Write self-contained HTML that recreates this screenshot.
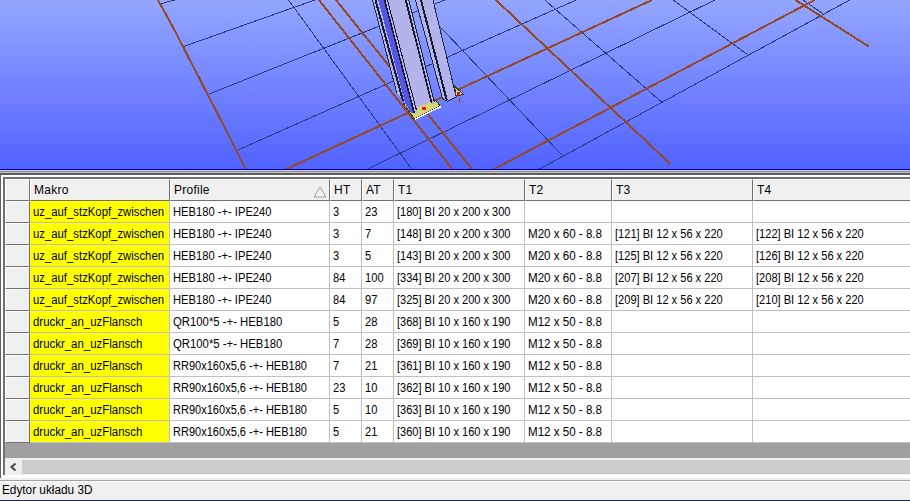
<!DOCTYPE html><html><head><meta charset="utf-8"><title>Edytor układu 3D</title><style>html,body{margin:0;padding:0;}
body{width:910px;height:501px;overflow:hidden;position:relative;background:#f0f0f0;font-family:"Liberation Sans",sans-serif;font-size:12px;color:#000;}
#scene{position:absolute;left:0;top:0;width:910px;height:170px;overflow:hidden;background:linear-gradient(#94a6ff 0px,#5163ff 169px);}
#scene svg{position:absolute;left:0;top:0;display:block;}
.ln{position:absolute;left:0;width:910px;}
#frame{position:absolute;left:0;top:173px;width:915px;height:305px;background:#fff;border-left:1px solid #606060;border-top:2px solid #606060;box-sizing:border-box;}
#inner{position:absolute;left:2px;top:2px;width:915px;height:298px;background:#a0a0a0;border-left:2px solid #707070;border-top:2px solid #707070;box-sizing:border-box;}
#grid{position:absolute;left:0;top:0;width:910px;height:264px;background:#a0a0a0;}
.hrow{position:absolute;left:0;top:0;height:22px;width:910px;}
.hc{position:absolute;top:0;height:22px;box-sizing:border-box;background:#f0f0f0;border-right:1px solid #707070;border-bottom:1px solid #707070;border-left:1px solid #fff;border-top:1px solid #fff;}
.hc span{position:absolute;left:3px;top:3px;white-space:nowrap;letter-spacing:0.25px;}
.tri{position:absolute;right:2px;top:6px;}
.row{position:absolute;left:0;height:22px;width:910px;}
.rh{position:absolute;top:0;height:22px;box-sizing:border-box;background:#f0f0f0;border-right:1px solid #707070;border-bottom:1px solid #707070;border-left:1px solid #fff;border-top:1px solid #fff;}
.c{position:absolute;top:0;height:22px;box-sizing:border-box;background:#fff;border-right:1px solid #c0c0c0;border-bottom:1px solid #c0c0c0;}
.c.y{background:#ffff00;}
.c span{position:absolute;left:3px;top:4px;white-space:nowrap;display:inline-block;transform-origin:0 50%;}
#hscroll{position:absolute;left:0;top:279px;width:910px;height:17px;background:#f0f0f0;}
#hscroll .arrow{position:absolute;left:4px;top:3px;}
#hscroll .thumb{position:absolute;left:17px;top:2px;width:900px;height:14px;background:#cdcdcd;}
#status{position:absolute;left:0;top:480px;width:910px;height:20px;background:#f0f0f0;border-top:1px solid #a0a0a0;box-sizing:border-box;}
#status i{position:absolute;left:0;top:0;width:910px;height:1px;background:#fff;}
#status span{position:absolute;left:2px;top:2px;white-space:nowrap;display:inline-block;transform-origin:0 50%;}
#bot{position:absolute;left:0;top:500px;width:910px;height:1px;background:#1c2a48;}
</style></head><body>
<div id="scene"><svg width="910" height="170" viewBox="0 0 910 170" shape-rendering="crispEdges">
<g stroke="#2a3a7a" stroke-width="1" fill="none">
<line x1="159.2" y1="4.2" x2="175" y2="0"/>
<line x1="183.7" y1="46.5" x2="314.8" y2="0"/>
<line x1="208.2" y1="94.4" x2="444.7" y2="0"/>
<line x1="238.4" y1="149.8" x2="576.2" y2="0"/>
<line x1="367.7" y1="169" x2="715" y2="0"/>
<line x1="537.8" y1="170" x2="849.6" y2="0"/>
<line x1="288.5" y1="0" x2="411.6" y2="169"/>
<line x1="439" y1="25.7" x2="562.3" y2="155.5"/>
<line x1="544.8" y1="0" x2="662.7" y2="103"/>
<line x1="673.2" y1="0" x2="748.3" y2="55.2"/>
<line x1="803" y1="0" x2="824" y2="14.5"/>
</g>
<g stroke="#964822" stroke-width="2" fill="none">
<polyline points="158,0 174.4,30 226,130 245.8,169.5"/>
<line x1="285.5" y1="169.5" x2="652" y2="0"/>
<line x1="492.4" y1="170" x2="814.6" y2="0"/>
<line x1="319" y1="0" x2="452.3" y2="169"/>
<line x1="336" y1="0" x2="472" y2="169"/>
<line x1="495.9" y1="0" x2="670.6" y2="164.2"/>
<line x1="795.4" y1="0" x2="868.8" y2="46.5"/>
</g>
<!-- base plate -->
<g>
<polygon points="403.4,103.5 414.4,118.9 440.3,106.1 435.9,100.5 420,96" fill="#d6d674" stroke="#3a3a30" stroke-width="1"/>
<line x1="415" y1="119.2" x2="440.6" y2="106.6" stroke="#ffffff" stroke-width="1.6"/>
</g>
<!-- column 2 -->
<g>
<polygon points="415.5,0 433,0 456.1,96.5 447.8,101 442.5,98.5" fill="#b4b4ea"/>
<line x1="415.5" y1="0" x2="442.5" y2="98.5" stroke="#20284a" stroke-width="1"/>
<line x1="421" y1="0" x2="446.7" y2="100" stroke="#181c30" stroke-width="2"/>
<line x1="433" y1="0" x2="456.1" y2="96.5" stroke="#20284a" stroke-width="1"/>
<polyline points="442.5,98.5 447.8,101.3 456.1,96.9" fill="none" stroke="#20284a" stroke-width="1"/>
<polygon points="454.4,85.9 463.2,94.3 456.3,96.2" fill="#d6d674" stroke="#3a3a30" stroke-width="1"/>
<rect x="456.5" y="91.5" width="3" height="3" fill="#e01818"/>
<rect x="458.5" y="97.5" width="1" height="4" fill="#e01818"/>
</g>
<!-- column 1 -->
<g>
<polygon points="372.5,0 378.3,0 405.1,103.5 396.8,93" fill="#b4b4ea"/>
<line x1="372.5" y1="0" x2="396.8" y2="93" stroke="#20284a" stroke-width="1"/>
<line x1="375.5" y1="0" x2="403" y2="101" stroke="#181c30" stroke-width="2"/>
<polygon points="378.3,0 383.9,0 413.5,113 410.5,112.3 405.1,103.5" fill="#5456e6"/>
<polygon points="383.9,0 387.9,0 416.6,108 416.6,114.5 413.5,113" fill="#b4b4ea"/>
<line x1="384.6" y1="0" x2="414.2" y2="113" stroke="#181c30" stroke-width="1.6"/>
<line x1="387.4" y1="0" x2="416.4" y2="110" stroke="#181c30" stroke-width="1"/>
<polygon points="387.9,0 405,0 431,101.7 416.6,108" fill="#b4b4ea"/>
<polygon points="405,0 409.3,0 434.6,101 434.2,104.6 431,103.5" fill="#b4b4ea"/>
<line x1="405.8" y1="0" x2="431.6" y2="103" stroke="#181c30" stroke-width="1.8"/>
<line x1="408.8" y1="0" x2="434.2" y2="102" stroke="#181c30" stroke-width="1"/>
<rect x="422" y="106.5" width="4" height="3.5" fill="#e01818"/>
</g>
<rect x="0" y="169" width="910" height="1" fill="#0000a8"/>
</svg>
</div>
<div class="ln" style="top:170px;height:1px;background:#c8c8ff"></div><div class="ln" style="top:171px;height:1px;background:#909090"></div><div class="ln" style="top:172px;height:1px;background:#c0c0c0"></div>
<div id="frame"><div id="inner"><div id="grid">
<div class="hrow">
<div class="hc" style="left:0px;width:25px"><span></span></div>
<div class="hc" style="left:25px;width:140px"><span>Makro</span></div>
<div class="hc" style="left:165px;width:160px"><span>Profile</span><svg class="tri" width="14" height="12" viewBox="0 0 14 12"><path d="M7 1 L13 11 L1 11 Z" fill="#f4f4f4" stroke="#9a9a9a" stroke-width="1"/></svg></div>
<div class="hc" style="left:325px;width:32px"><span>HT</span></div>
<div class="hc" style="left:357px;width:32px"><span>AT</span></div>
<div class="hc" style="left:389px;width:131px"><span>T1</span></div>
<div class="hc" style="left:520px;width:87px"><span>T2</span></div>
<div class="hc" style="left:607px;width:141px"><span>T3</span></div>
<div class="hc" style="left:748px;width:162px"><span>T4</span></div>
</div>
<div class="row" style="top:22px">
<div class="rh" style="left:0;width:25px"></div>
<div class="c y" style="left:25px;width:140px"><span style="transform:scaleX(0.9441)">uz_auf_stzKopf_zwischen</span></div>
<div class="c" style="left:165px;width:160px"><span style="transform:scaleX(0.9316)">HEB180 -+- IPE240</span></div>
<div class="c" style="left:325px;width:32px"><span style="transform:scaleX(0.9271)">3</span></div>
<div class="c" style="left:357px;width:32px"><span style="transform:scaleX(0.9282)">23</span></div>
<div class="c" style="left:389px;width:131px"><span style="transform:scaleX(0.9196)">[180] BI 20 x 200 x 300</span></div>
<div class="c" style="left:520px;width:87px"><span></span></div>
<div class="c" style="left:607px;width:141px"><span></span></div>
<div class="c" style="left:748px;width:162px"><span></span></div>
</div>
<div class="row" style="top:44px">
<div class="rh" style="left:0;width:25px"></div>
<div class="c y" style="left:25px;width:140px"><span style="transform:scaleX(0.9441)">uz_auf_stzKopf_zwischen</span></div>
<div class="c" style="left:165px;width:160px"><span style="transform:scaleX(0.9316)">HEB180 -+- IPE240</span></div>
<div class="c" style="left:325px;width:32px"><span style="transform:scaleX(0.9271)">3</span></div>
<div class="c" style="left:357px;width:32px"><span style="transform:scaleX(0.9271)">7</span></div>
<div class="c" style="left:389px;width:131px"><span style="transform:scaleX(0.9196)">[148] BI 20 x 200 x 300</span></div>
<div class="c" style="left:520px;width:87px"><span style="transform:scaleX(0.9646)">M20 x 60 - 8.8</span></div>
<div class="c" style="left:607px;width:141px"><span style="transform:scaleX(0.9225)">[121] BI 12 x 56 x 220</span></div>
<div class="c" style="left:748px;width:162px"><span style="transform:scaleX(0.9225)">[122] BI 12 x 56 x 220</span></div>
</div>
<div class="row" style="top:66px">
<div class="rh" style="left:0;width:25px"></div>
<div class="c y" style="left:25px;width:140px"><span style="transform:scaleX(0.9441)">uz_auf_stzKopf_zwischen</span></div>
<div class="c" style="left:165px;width:160px"><span style="transform:scaleX(0.9316)">HEB180 -+- IPE240</span></div>
<div class="c" style="left:325px;width:32px"><span style="transform:scaleX(0.9271)">3</span></div>
<div class="c" style="left:357px;width:32px"><span style="transform:scaleX(0.9271)">5</span></div>
<div class="c" style="left:389px;width:131px"><span style="transform:scaleX(0.9196)">[143] BI 20 x 200 x 300</span></div>
<div class="c" style="left:520px;width:87px"><span style="transform:scaleX(0.9646)">M20 x 60 - 8.8</span></div>
<div class="c" style="left:607px;width:141px"><span style="transform:scaleX(0.9225)">[125] BI 12 x 56 x 220</span></div>
<div class="c" style="left:748px;width:162px"><span style="transform:scaleX(0.9225)">[126] BI 12 x 56 x 220</span></div>
</div>
<div class="row" style="top:88px">
<div class="rh" style="left:0;width:25px"></div>
<div class="c y" style="left:25px;width:140px"><span style="transform:scaleX(0.9441)">uz_auf_stzKopf_zwischen</span></div>
<div class="c" style="left:165px;width:160px"><span style="transform:scaleX(0.9316)">HEB180 -+- IPE240</span></div>
<div class="c" style="left:325px;width:32px"><span style="transform:scaleX(0.9282)">84</span></div>
<div class="c" style="left:357px;width:32px"><span style="transform:scaleX(0.9285)">100</span></div>
<div class="c" style="left:389px;width:131px"><span style="transform:scaleX(0.9196)">[334] BI 20 x 200 x 300</span></div>
<div class="c" style="left:520px;width:87px"><span style="transform:scaleX(0.9646)">M20 x 60 - 8.8</span></div>
<div class="c" style="left:607px;width:141px"><span style="transform:scaleX(0.9225)">[207] BI 12 x 56 x 220</span></div>
<div class="c" style="left:748px;width:162px"><span style="transform:scaleX(0.9225)">[208] BI 12 x 56 x 220</span></div>
</div>
<div class="row" style="top:110px">
<div class="rh" style="left:0;width:25px"></div>
<div class="c y" style="left:25px;width:140px"><span style="transform:scaleX(0.9441)">uz_auf_stzKopf_zwischen</span></div>
<div class="c" style="left:165px;width:160px"><span style="transform:scaleX(0.9316)">HEB180 -+- IPE240</span></div>
<div class="c" style="left:325px;width:32px"><span style="transform:scaleX(0.9282)">84</span></div>
<div class="c" style="left:357px;width:32px"><span style="transform:scaleX(0.9282)">97</span></div>
<div class="c" style="left:389px;width:131px"><span style="transform:scaleX(0.9196)">[325] BI 20 x 200 x 300</span></div>
<div class="c" style="left:520px;width:87px"><span style="transform:scaleX(0.9646)">M20 x 60 - 8.8</span></div>
<div class="c" style="left:607px;width:141px"><span style="transform:scaleX(0.9225)">[209] BI 12 x 56 x 220</span></div>
<div class="c" style="left:748px;width:162px"><span style="transform:scaleX(0.9225)">[210] BI 12 x 56 x 220</span></div>
</div>
<div class="row" style="top:132px">
<div class="rh" style="left:0;width:25px"></div>
<div class="c y" style="left:25px;width:140px"><span style="transform:scaleX(0.9526)">druckr_an_uzFlansch</span></div>
<div class="c" style="left:165px;width:160px"><span style="transform:scaleX(0.9444)">QR100*5 -+- HEB180</span></div>
<div class="c" style="left:325px;width:32px"><span style="transform:scaleX(0.9271)">5</span></div>
<div class="c" style="left:357px;width:32px"><span style="transform:scaleX(0.9282)">28</span></div>
<div class="c" style="left:389px;width:131px"><span style="transform:scaleX(0.9196)">[368] BI 10 x 160 x 190</span></div>
<div class="c" style="left:520px;width:87px"><span style="transform:scaleX(0.9646)">M12 x 50 - 8.8</span></div>
<div class="c" style="left:607px;width:141px"><span></span></div>
<div class="c" style="left:748px;width:162px"><span></span></div>
</div>
<div class="row" style="top:154px">
<div class="rh" style="left:0;width:25px"></div>
<div class="c y" style="left:25px;width:140px"><span style="transform:scaleX(0.9526)">druckr_an_uzFlansch</span></div>
<div class="c" style="left:165px;width:160px"><span style="transform:scaleX(0.9444)">QR100*5 -+- HEB180</span></div>
<div class="c" style="left:325px;width:32px"><span style="transform:scaleX(0.9271)">7</span></div>
<div class="c" style="left:357px;width:32px"><span style="transform:scaleX(0.9282)">28</span></div>
<div class="c" style="left:389px;width:131px"><span style="transform:scaleX(0.9196)">[369] BI 10 x 160 x 190</span></div>
<div class="c" style="left:520px;width:87px"><span style="transform:scaleX(0.9646)">M12 x 50 - 8.8</span></div>
<div class="c" style="left:607px;width:141px"><span></span></div>
<div class="c" style="left:748px;width:162px"><span></span></div>
</div>
<div class="row" style="top:176px">
<div class="rh" style="left:0;width:25px"></div>
<div class="c y" style="left:25px;width:140px"><span style="transform:scaleX(0.9526)">druckr_an_uzFlansch</span></div>
<div class="c" style="left:165px;width:160px"><span style="transform:scaleX(0.9194)">RR90x160x5,6 -+- HEB180</span></div>
<div class="c" style="left:325px;width:32px"><span style="transform:scaleX(0.9271)">7</span></div>
<div class="c" style="left:357px;width:32px"><span style="transform:scaleX(0.9282)">21</span></div>
<div class="c" style="left:389px;width:131px"><span style="transform:scaleX(0.9196)">[361] BI 10 x 160 x 190</span></div>
<div class="c" style="left:520px;width:87px"><span style="transform:scaleX(0.9646)">M12 x 50 - 8.8</span></div>
<div class="c" style="left:607px;width:141px"><span></span></div>
<div class="c" style="left:748px;width:162px"><span></span></div>
</div>
<div class="row" style="top:198px">
<div class="rh" style="left:0;width:25px"></div>
<div class="c y" style="left:25px;width:140px"><span style="transform:scaleX(0.9526)">druckr_an_uzFlansch</span></div>
<div class="c" style="left:165px;width:160px"><span style="transform:scaleX(0.9194)">RR90x160x5,6 -+- HEB180</span></div>
<div class="c" style="left:325px;width:32px"><span style="transform:scaleX(0.9282)">23</span></div>
<div class="c" style="left:357px;width:32px"><span style="transform:scaleX(0.9282)">10</span></div>
<div class="c" style="left:389px;width:131px"><span style="transform:scaleX(0.9196)">[362] BI 10 x 160 x 190</span></div>
<div class="c" style="left:520px;width:87px"><span style="transform:scaleX(0.9646)">M12 x 50 - 8.8</span></div>
<div class="c" style="left:607px;width:141px"><span></span></div>
<div class="c" style="left:748px;width:162px"><span></span></div>
</div>
<div class="row" style="top:220px">
<div class="rh" style="left:0;width:25px"></div>
<div class="c y" style="left:25px;width:140px"><span style="transform:scaleX(0.9526)">druckr_an_uzFlansch</span></div>
<div class="c" style="left:165px;width:160px"><span style="transform:scaleX(0.9194)">RR90x160x5,6 -+- HEB180</span></div>
<div class="c" style="left:325px;width:32px"><span style="transform:scaleX(0.9271)">5</span></div>
<div class="c" style="left:357px;width:32px"><span style="transform:scaleX(0.9282)">10</span></div>
<div class="c" style="left:389px;width:131px"><span style="transform:scaleX(0.9196)">[363] BI 10 x 160 x 190</span></div>
<div class="c" style="left:520px;width:87px"><span style="transform:scaleX(0.9646)">M12 x 50 - 8.8</span></div>
<div class="c" style="left:607px;width:141px"><span></span></div>
<div class="c" style="left:748px;width:162px"><span></span></div>
</div>
<div class="row" style="top:242px">
<div class="rh" style="left:0;width:25px"></div>
<div class="c y" style="left:25px;width:140px"><span style="transform:scaleX(0.9526)">druckr_an_uzFlansch</span></div>
<div class="c" style="left:165px;width:160px"><span style="transform:scaleX(0.9194)">RR90x160x5,6 -+- HEB180</span></div>
<div class="c" style="left:325px;width:32px"><span style="transform:scaleX(0.9271)">5</span></div>
<div class="c" style="left:357px;width:32px"><span style="transform:scaleX(0.9282)">21</span></div>
<div class="c" style="left:389px;width:131px"><span style="transform:scaleX(0.9196)">[360] BI 10 x 160 x 190</span></div>
<div class="c" style="left:520px;width:87px"><span style="transform:scaleX(0.9646)">M12 x 50 - 8.8</span></div>
<div class="c" style="left:607px;width:141px"><span></span></div>
<div class="c" style="left:748px;width:162px"><span></span></div>
</div>
</div>
<div id="hscroll"><div class="arrow"><svg width="8" height="10" viewBox="0 0 8 10"><path d="M6.5 1.5 L2.5 5 L6.5 8.5" fill="none" stroke="#505050" stroke-width="2.2"/></svg></div><div class="thumb"></div></div>
</div></div>
<div id="status"><i></i><span style="transform:scaleX(0.9830)">Edytor układu 3D</span></div>
<div id="bot"></div>
</body></html>
